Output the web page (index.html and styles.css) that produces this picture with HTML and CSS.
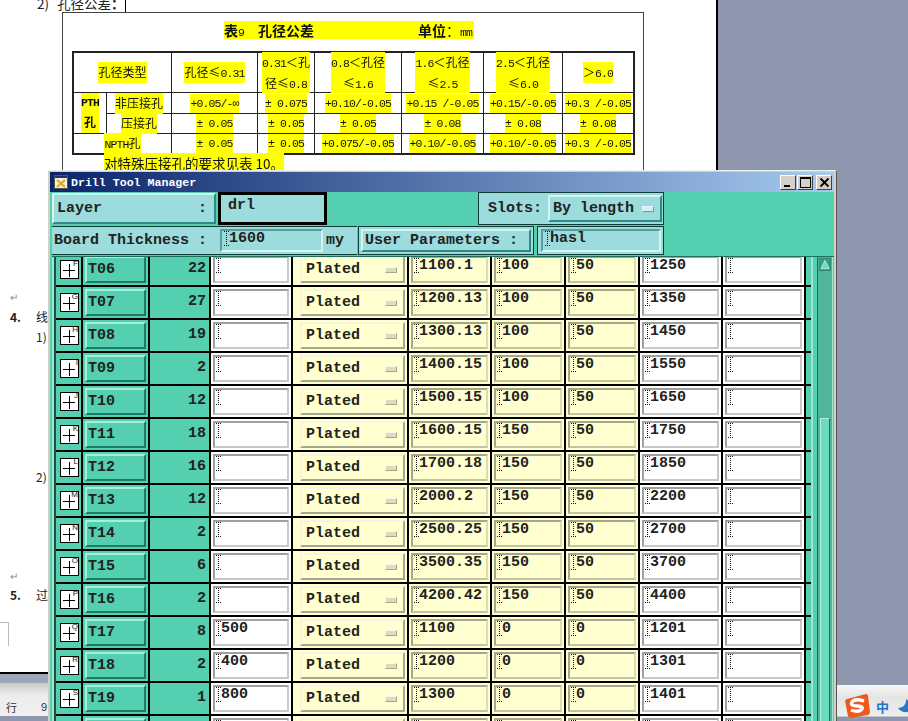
FILE: index.html
```html
<!DOCTYPE html>
<html lang="en">
<head>
  <meta charset="UTF-8">
  <title>Drill Tool Manager</title>
  <link rel="stylesheet" href="styles.css">
</head>
<body>
<div class="desktop">

  <div class="doc">
    <div class="top-line">2)&nbsp;&nbsp;孔径公差<b>：</b><span class="caret"></span></div>
    <div class="sheet">
      <div class="sheet-title"><mark><b>表</b><span class="num">9</span><span class="gap-a"></span><b>孔径公差</b><span class="gap-b"></span><b>单位</b>：<span class="num">mm</span></mark></div>
      <div class="spec">
        <div class="spec-head"><mark><span class="zh">孔径类型</span></mark></div>
        <div class="spec-head"><mark><span class="zh">孔径≤</span>0.31</mark></div>
        <div class="spec-head"><mark>0.31<span class="zh">＜孔</span><br><span class="zh">径≤</span>0.8</mark></div>
        <div class="spec-head"><mark>0.8<span class="zh">＜孔径</span><br><span class="zh">≤</span>1.6</mark></div>
        <div class="spec-head"><mark>1.6<span class="zh">＜孔径</span><br><span class="zh">≤</span>2.5</mark></div>
        <div class="spec-head"><mark>2.5<span class="zh">＜孔径</span><br><span class="zh">≤</span>6.0</mark></div>
        <div class="spec-head"><mark><span class="zh">＞</span>6.0</mark></div>
        <div class="spec-side"><mark>PTH<br><span class="zh">孔</span></mark></div>
        <div><mark><span class="zh">非压接孔</span></mark></div>
        <div><mark>+0.05/-∞</mark></div>
        <div><mark>± 0.075</mark></div>
        <div><mark>+0.10/-0.05</mark></div>
        <div><mark>+0.15 /-0.05</mark></div>
        <div><mark>+0.15/-0.05</mark></div>
        <div><mark>+0.3 /-0.05</mark></div>
        <div><mark><span class="zh">压接孔</span></mark></div>
        <div><mark>± 0.05</mark></div>
        <div><mark>± 0.05</mark></div>
        <div><mark>± 0.05</mark></div>
        <div><mark>± 0.08</mark></div>
        <div><mark>± 0.08</mark></div>
        <div><mark>± 0.08</mark></div>
        <div class="spec-wide"><mark>NPTH<span class="zh">孔</span></mark></div>
        <div><mark>± 0.05</mark></div>
        <div><mark>± 0.05</mark></div>
        <div><mark>+0.075/-0.05</mark></div>
        <div><mark>+0.10/-0.05</mark></div>
        <div><mark>+0.10/-0.05</mark></div>
        <div><mark>+0.3 /-0.05</mark></div>
      </div>
      <div class="sheet-note"><mark>对特殊压接孔的要求见表 10。</mark></div>
    </div>
    <div class="doc-body">
      <div class="doc-mark m-a">↵</div>
      <div class="doc-line m-b"><b>4.</b><span class="hang">线</span></div>
      <div class="doc-line m-c"><span class="hang">1)</span></div>
      <div class="doc-line m-d"><span class="hang">2)</span></div>
      <div class="doc-mark m-e">↵</div>
      <div class="doc-line m-f"><b>5.</b><span class="hang">过</span></div>
    </div>
    <div class="doc-box"></div>
  </div>

  <div class="statusbar">
    <div class="status-band"></div>
    <div class="status-row"><span>行</span><span class="status-num">9</span></div>
  </div>

  <div class="tray">
    <svg class="sogou" width="27" height="26" viewBox="0 0 27 26">
      <path d="M3 6 L22 1 Q24 1 24 3 L26 19 Q26 21 24 22 L7 25 Q5 25 4 23 L1 8 Q1 7 3 6 Z" fill="#ee5a1e"/>
      <path d="M20 8 Q11 5 8 9 Q6 13 13 13 Q19 13 18 16 Q15 20 7 17" fill="none" stroke="#fff" stroke-width="3.4"/>
    </svg>
    <span class="tray-cn">中</span>
    <svg class="moon" width="12" height="16" viewBox="0 0 12 16"><path d="M9 1 Q10 9 1 10 Q4 15 12 14 V3 Z" fill="#2a78c8"/></svg>
  </div>

  <div class="window">
    <div class="titlebar">
      <svg class="app-icon" width="14" height="14" viewBox="0 0 14 14">
        <rect x="0.5" y="0.5" width="13" height="13" fill="#f4f0dc" stroke="#555"/>
        <rect x="1" y="1" width="12" height="2" fill="#22306e"/>
        <path d="M3 5 L11 12 M11 5 L3 12" stroke="#d8a820" stroke-width="2"/>
      </svg>
      <span class="title-text">Drill Tool Manager</span>
      <div class="win-btns">
        <div class="win-btn"><svg width="11" height="11" viewBox="0 0 11 11"><rect x="1" y="8" width="6" height="2" fill="#000"/></svg></div>
        <div class="win-btn"><svg width="11" height="11" viewBox="0 0 11 11"><rect x="0.5" y="0.5" width="10" height="10" fill="none" stroke="#000"/><rect x="0" y="0" width="11" height="2" fill="#000"/></svg></div>
        <div class="win-btn win-close"><svg width="11" height="11" viewBox="0 0 11 11"><path d="M1.5 1.5 L9.5 9.5 M9.5 1.5 L1.5 9.5" stroke="#000" stroke-width="1.8"/></svg></div>
      </div>
    </div>

    <div class="client">
      <div class="head-row head-one">
        <div class="btn layer-btn"><span>Layer</span><span>:</span></div>
        <div class="layer-box">drl</div>
        <div class="slots">
          <span>Slots:</span>
          <div class="btn slots-opt">By length<i class="opt-mark"></i></div>
        </div>
      </div>
      <div class="head-row head-two">
        <div class="thick">
          <span class="thick-label">Board Thickness :</span>
          <div class="thick-field"><i class="ibeam"></i>1600</div>
          <span>my</span>
        </div>
        <div class="param-frame"><div class="btn param-btn">User Parameters :</div></div>
        <div class="hasl-frame"><div class="hasl-field"><i class="ibeam"></i>hasl</div></div>
      </div>

      <div class="body">
        <div class="tools">
          <div class="tool-grid" id="toolGrid"></div>
        </div>
        <div class="scrollbar">
          <div class="scroll-up"><svg width="11" height="11" viewBox="0 0 11 11"><path d="M5.5 1 L10 10 H1 Z" fill="#6cdcc0" stroke="#b4f0e0"/></svg></div>
          <div class="scroll-thumb"></div>
        </div>
      </div>
    </div>
  </div>
</div>
<script src="tools.js"></script>
</body>
</html>
```

FILE: tools.js
```js
const rows = [
  ['F', 'T06', 22, '', 'Plated', '1100.1', '100', '50', '1250'],
  ['G', 'T07', 27, '', 'Plated', '1200.13', '100', '50', '1350'],
  ['H', 'T08', 19, '', 'Plated', '1300.13', '100', '50', '1450'],
  ['I', 'T09', 2, '', 'Plated', '1400.15', '100', '50', '1550'],
  ['J', 'T10', 12, '', 'Plated', '1500.15', '100', '50', '1650'],
  ['K', 'T11', 18, '', 'Plated', '1600.15', '150', '50', '1750'],
  ['L', 'T12', 16, '', 'Plated', '1700.18', '150', '50', '1850'],
  ['M', 'T13', 12, '', 'Plated', '2000.2', '150', '50', '2200'],
  ['N', 'T14', 2, '', 'Plated', '2500.25', '150', '50', '2700'],
  ['O', 'T15', 6, '', 'Plated', '3500.35', '150', '50', '3700'],
  ['P', 'T16', 2, '', 'Plated', '4200.42', '150', '50', '4400'],
  ['Q', 'T17', 8, '500', 'Plated', '1100', '0', '0', '1201'],
  ['R', 'T18', 2, '400', 'Plated', '1200', '0', '0', '1301'],
  ['S', 'T19', 1, '800', 'Plated', '1300', '0', '0', '1401'],
  ['', '', '', '', '', '', '', '', '']
]

const field = (kind, text) =>
  `<div class="cell"><div class="field ${kind}"><i class="ibeam"></i>${text}</div></div>`

document.getElementById('toolGrid').innerHTML = rows.map(r => `
  <div class="cell"><div class="plus"><span class="plus-h"></span><span class="plus-v"></span><em>${r[0]}</em></div></div>
  <div class="cell"><div class="btn tool-btn">${r[1]}</div></div>
  <div class="cell count">${r[2]}</div>
  ${field('white', r[3])}
  <div class="cell"><div class="plated">${r[4]}<i class="opt-mark"></i></div></div>
  ${field('cream', r[5])}
  ${field('cream', r[6])}
  ${field('cream', r[7])}
  ${field('white', r[8])}
  ${field('white', '')}
  <div class="cell stub"></div>
`).join('')
```

FILE: styles.css
```css
* {
  box-sizing: border-box;
}
html, body {
  margin: 0;
  padding: 0;
}
mark {
  background: #ffff00;
  color: #111;
}
.desktop {
  position: relative;
  width: 908px;
  height: 721px;
  overflow: hidden;
  background: #8e97ad;
  font-family: "Liberation Sans", "Noto Sans CJK SC", sans-serif;
}

/* word document behind the window */
.doc {
  position: absolute;
  left: 0;
  top: 0;
  width: 718px;
  height: 674px;
  background: #fff;
  border-right: 2px solid #000;
  border-bottom: 2px solid #000;
  color: #222;
  font-size: 12px;
}
.top-line {
  position: absolute;
  left: 37px;
  top: -6px;
  font-family: "Noto Sans CJK SC", sans-serif;
  font-size: 13.5px;
  line-height: 18px;
  word-spacing: 1px;
  white-space: nowrap;
}
.caret {
  display: inline-block;
  width: 1px;
  height: 14px;
  background: #000;
  vertical-align: -3px;
}
.sheet {
  position: absolute;
  left: 62px;
  top: 12px;
  width: 582px;
  height: 160px;
  border: 1px solid #444;
  border-bottom: none;
  background: #fff;
  font-family: "Liberation Mono", "Noto Sans CJK SC", monospace;
  font-size: 11.5px;
  letter-spacing: -0.9px;
  filter: blur(0.3px);
}
.zh {
  font-family: "Noto Sans CJK SC", sans-serif;
  font-size: 12px;
  letter-spacing: 0;
}
.num {
  font-family: "Liberation Mono", monospace;
  font-size: 11.5px;
  letter-spacing: -0.9px;
}
.sheet-title {
  position: absolute;
  left: 161px;
  top: 8px;
  height: 18px;
  font-family: "Noto Sans CJK SC", sans-serif;
  font-size: 14px;
  line-height: 18px;
  letter-spacing: 0;
  white-space: nowrap;
}
.sheet-title mark {
  display: inline-block;
  width: 250px;
  height: 18px;
}
.gap-a {
  display: inline-block;
  width: 14px;
}
.gap-b {
  display: inline-block;
  width: 104px;
}
.spec {
  position: absolute;
  left: 9px;
  top: 38px;
  width: 563px;
  height: 104px;
  display: grid;
  grid-template-columns: 32px 64px 85px 56px 86px 81px 78px 70px;
  grid-template-rows: 39px 20px 19px 19px;
  gap: 1px;
  background: #222;
  border: 2px solid #222;
}
.spec > div {
  display: flex;
  align-items: center;
  justify-content: center;
  text-align: center;
  background: #fff;
  line-height: 19px;
  white-space: nowrap;
}
.spec > .spec-head:first-child {
  grid-column: span 2;
}
.spec > .spec-side {
  grid-row: span 2;
  font-weight: bold;
}
.spec > .spec-wide {
  grid-column: span 2;
}
.sheet-note {
  position: absolute;
  left: 41px;
  top: 143px;
  font-family: "Noto Sans CJK SC", sans-serif;
  font-size: 13.5px;
  line-height: 15px;
  letter-spacing: 0;
  white-space: nowrap;
}
.doc-body {
  font-family: "Noto Sans CJK SC", sans-serif;
}
.doc-line {
  position: absolute;
  left: 10px;
  line-height: 16px;
  white-space: nowrap;
}
.hang {
  position: absolute;
  left: 26px;
  top: 0;
}
.doc-mark {
  position: absolute;
  left: 10px;
  color: #888;
  font-size: 10px;
  line-height: 12px;
}
.m-a { top: 291px; }
.m-b { top: 309px; }
.m-c { top: 329px; }
.m-d { top: 469px; }
.m-e { top: 570px; }
.m-f { top: 587px; }
.doc-box {
  position: absolute;
  left: -1px;
  top: 622px;
  width: 10px;
  height: 24px;
  border: 1px solid #bbb;
  border-bottom: none;
}

.statusbar {
  position: absolute;
  left: 0;
  top: 674px;
  width: 48px;
  height: 47px;
}
.status-band {
  height: 9px;
  background: #9fa6ba;
}
.status-row {
  height: 33px;
  padding: 16px 0 0 6px;
  display: flex;
  gap: 24px;
  background: linear-gradient(#c8c8c8 0, #ececec 12px, #f0f0f0 100%);
  font-family: "Noto Sans CJK SC", sans-serif;
  font-size: 11px;
  line-height: 16px;
  color: #333;
}
.status-num {
  font-family: "Liberation Sans", sans-serif;
}
.tray {
  position: absolute;
  left: 836px;
  top: 685px;
  width: 72px;
  height: 36px;
  padding: 8px 0 0 8px;
  display: flex;
  align-items: flex-start;
  background: linear-gradient(#f8f8f8 0, #e4e4e4 12px, #eeeeee 31px, #8e97ad 32px);
}
.sogou {
  flex: none;
}
.tray-cn {
  margin: 6px 0 0 5px;
  width: 14px;
  color: #1f72c8;
  font-family: "Noto Sans CJK SC", sans-serif;
  font-size: 13px;
  font-weight: bold;
  line-height: 15px;
}
.moon {
  margin: 5px 0 0 8px;
  flex: none;
}

/* drill tool window */
.window {
  position: absolute;
  left: 48px;
  top: 170px;
  width: 789px;
  height: 560px;
  padding: 1px 2px 0 2px;
  background: #d4d0c8;
  border-right: 1px solid #555;
  border-top: 1px solid #eee;
  font-family: "Liberation Mono", monospace;
  font-weight: bold;
  font-size: 15px;
  color: #222;
}
.titlebar {
  display: flex;
  align-items: center;
  height: 20px;
  padding: 0 2px 0 4px;
  background: linear-gradient(90deg, #0a246a, #a6caf0);
}
.app-icon {
  flex: none;
}
.title-text {
  margin-left: 3px;
  font-size: 11.6px;
  color: #fff;
}
.win-btns {
  margin-left: auto;
  display: flex;
  gap: 1px;
}
.win-btn {
  width: 16px;
  height: 15px;
  display: flex;
  align-items: center;
  justify-content: center;
  background: #d4d0c8;
  border: 1px solid;
  border-color: #fff #404040 #404040 #fff;
}
.win-close {
  margin-left: 2px;
}
.client {
  height: 540px;
  padding-left: 2px;
  background: #54cfb0;
}
.head-row {
  display: flex;
  white-space: nowrap;
}
.head-one {
  height: 33px;
}
.head-two {
  margin-top: 1px;
  height: 29px;
}
.btn {
  background: #9cdcdc;
  border: 2px solid;
  border-color: #d2f4f2 #2f8a86 #2f8a86 #d2f4f2;
}
.layer-btn {
  width: 164px;
  height: 31px;
  margin-top: 1px;
  padding: 0 7px 0 3px;
  display: flex;
  justify-content: space-between;
  align-items: center;
}
.layer-box {
  width: 109px;
  height: 33px;
  margin-left: 2px;
  padding: 2px 0 0 7px;
  background: #9cdcdc;
  border: 3px solid #000;
  line-height: 18px;
}
.slots {
  width: 186px;
  height: 33px;
  margin-left: 151px;
  padding-left: 9px;
  display: flex;
  align-items: center;
  gap: 6px;
  background: #9cdcdc;
  border: 1px solid #0c3a34;
}
.slots-opt {
  width: 114px;
  height: 27px;
  padding: 0 6px 0 3px;
  display: flex;
  align-items: center;
  justify-content: space-between;
}
.opt-mark {
  display: block;
  width: 12px;
  height: 6px;
  background: #d6f0ee;
  border: 1px solid;
  border-color: #eef #5a9 #5a9 #eef;
}
.thick {
  width: 305px;
  height: 29px;
  padding-left: 2px;
  display: flex;
  align-items: center;
  background: #9cdcdc;
  border-top: 1px solid #0c3a34;
  border-bottom: 1px solid #0c3a34;
}
.thick-label {
  width: 166px;
  flex: none;
}
.thick-field {
  width: 103px;
  height: 23px;
  margin-right: 3px;
  padding-left: 2px;
  background: #9cdcdc;
  border: 2px solid;
  border-color: #5b9c9c #d2f4f2 #d2f4f2 #5b9c9c;
  line-height: 16px;
}
.param-frame {
  width: 176px;
  margin-left: 1px;
  padding: 2px;
  background: #9cdcdc;
  border: 1px solid #0c3a34;
}
.param-btn {
  height: 23px;
  padding-left: 2px;
  line-height: 19px;
}
.hasl-frame {
  width: 127px;
  margin-left: 3px;
  padding: 2px 2px 2px 3px;
  background: #9cdcdc;
  border: 1px solid #0c3a34;
}
.hasl-field {
  height: 23px;
  padding-left: 2px;
  border: 2px solid;
  border-color: #5b9c9c #d2f4f2 #d2f4f2 #5b9c9c;
  line-height: 16px;
}

/* text cursor drawn in every input, dotted with little caps */
.ibeam {
  position: relative;
  float: left;
  width: 5px;
  height: 15px;
  background: repeating-linear-gradient(#111 0 1px, transparent 1px 2px) center / 1px 100% no-repeat;
}
.ibeam::before, .ibeam::after {
  content: "";
  position: absolute;
  left: 0;
  width: 5px;
  height: 1px;
  background: repeating-linear-gradient(90deg, #111 0 1px, transparent 1px 2px);
}
.ibeam::before {
  top: 0;
}
.ibeam::after {
  bottom: 0;
}
.body {
  display: flex;
  height: 480px;
  margin-top: 1px;
  border-top: 1px solid #1c6e5e;
}
.tools {
  flex: none;
  width: 761px;
  height: 479px;
  overflow: hidden;
  border-right: 2px solid #9fe6d2;
  border-left: 2px solid #9fe6d2;
}
.tool-grid {
  display: grid;
  grid-template-columns: 25px 65px 59px 80px 114px 81px 72px 72px 81px 81px 5px;
  grid-auto-rows: 31px;
  gap: 2px;
  margin-top: -3px;
  background: #000;
  border-left: 2px solid #174f42;
}
.cell {
  padding: 2px;
  background: #54cfb0;
}
.stub {
  padding: 0;
}
.plus {
  position: relative;
  width: 19px;
  height: 19px;
  margin: 4px 0 0 2px;
  background: #fff;
  border: 1px solid #000;
}
.plus-h {
  position: absolute;
  left: 2px;
  top: 9px;
  width: 12px;
  height: 1px;
  background: #000;
}
.plus-v {
  position: absolute;
  left: 8px;
  top: 3px;
  width: 1px;
  height: 13px;
  background: #000;
}
.plus em {
  position: absolute;
  right: 0;
  top: -1px;
  font-family: "Liberation Sans", sans-serif;
  font-size: 8px;
  font-style: normal;
  font-weight: normal;
  line-height: 8px;
  color: #222;
}
.tool-btn {
  height: 27px;
  padding-left: 1px;
  background: #54cfb0;
  border-color: #a4efdc #1c7a68 #1c7a68 #a4efdc;
  line-height: 23px;
}
.count {
  padding: 0 3px 0 0;
  text-align: right;
  line-height: 30px;
}
.field {
  height: 27px;
  padding-left: 1px;
  border: 2px solid;
  line-height: 16px;
  white-space: nowrap;
  overflow: hidden;
}
.white {
  background: #fff;
  border-color: #a0a0a0 #c8c8c8 #c8c8c8 #a0a0a0;
}
.cream {
  background: #ffffd0;
  border-color: #a6a68c #dcdcb0 #c4c4a0 #a6a68c;
}
.cell:has(.white) {
  background: #fff;
}
.cell:has(.cream), .cell:has(.plated) {
  background: #ffffd0;
}
.cell:has(.plated) {
  padding-left: 7px;
}
.plated {
  height: 27px;
  padding: 0 6px 0 4px;
  display: flex;
  align-items: center;
  justify-content: space-between;
  background: #ffffd0;
  border: 2px solid;
  border-color: #f4f4e0 #a6a68c #a6a68c #f4f4e0;
}
.plated .opt-mark {
  background: #dcdcc0;
  border-color: #f8f8e8 #a6a68c #a6a68c #f8f8e8;
}
.scrollbar {
  position: relative;
  flex: none;
  width: 16px;
  height: 480px;
  margin-left: 4px;
  padding: 1px;
  background: #4fb59b;
  border-left: 1px solid #1c6e5e;
  border-right: 1px solid #9fe6d2;
}
.scroll-up {
  height: 13px;
  background: #3c9c84;
  border: 1px solid #2c8a74;
  display: flex;
  justify-content: center;
}
.scroll-thumb {
  margin: 147px 1px 0;
  height: 320px;
  background: #6cdcc0;
  border: 1px solid;
  border-color: #b4f0e0 #1c6e5e #1c6e5e #b4f0e0;
}
```
